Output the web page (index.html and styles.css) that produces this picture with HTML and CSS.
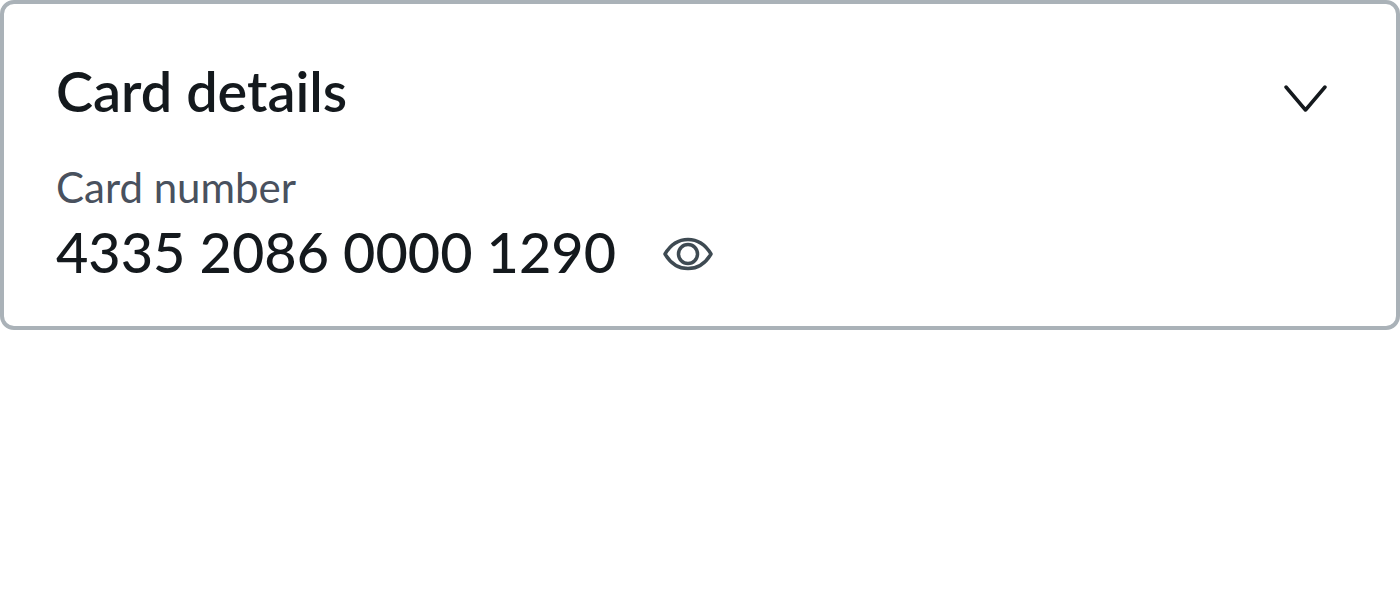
FILE: index.html
```html
<!DOCTYPE html>
<html lang="en">
<head>
    <meta charset="UTF-8">
    <title>Card details</title>
    <link rel="stylesheet" href="styles.css">
</head>
<body>
    <section class="card">
        <div class="card-header">
            <h2>Card details</h2>
            <svg class="chevron" width="44" height="30" viewBox="0 0 44 30" fill="none">
                <path d="M3 3L22.500 26L42 3" stroke="#14191d" stroke-width="3.500" stroke-linecap="round" stroke-linejoin="round"/>
            </svg>
        </div>
        <div class="label">Card number</div>
        <div class="value-row">
            <span class="value">4335 2086 0000 1290</span>
            <svg class="eye" width="50" height="34" viewBox="0 0 50 34" fill="none">
                <path d="M2 17C8 7 15 2.500 25 2.500C35 2.500 42 7 48 17C42 27 35 31.500 25 31.500C15 31.500 8 27 2 17Z" stroke="#3e4a52" stroke-width="3.500" stroke-linejoin="round"/>
                <circle cx="25" cy="17" r="9.500" stroke="#3e4a52" stroke-width="3.500"/>
            </svg>
        </div>
    </section>
</body>
</html>
```

FILE: styles.css
```css
body {
    margin: 0;
    background-color: #fff;
    font-family: Lato, sans-serif;
    color: #14191d;
}
.card {
    height: 330px;
    box-sizing: border-box;
    padding: 57px 69px 0 52px;
    border: 4px solid #aab2b8;
    border-radius: 14px;
}
.card-header {
    display: flex;
    justify-content: space-between;
    align-items: center;
    height: 60px;
}
h2 {
    margin: 0;
    font-size: 55.800px;
    font-weight: 600;
    line-height: 60px;
}
.chevron {
    margin-top: 15px;
}
.label {
    margin-top: 41px;
    font-size: 42px;
    line-height: 50px;
    color: #49515e;
}
.value-row {
    display: flex;
    align-items: center;
    gap: 47px;
    margin-top: 7px;
}
.value {
    font-size: 55.800px;
    font-weight: 500;
    line-height: 66px;
}
.eye {
    margin-top: 3px;
}
```
